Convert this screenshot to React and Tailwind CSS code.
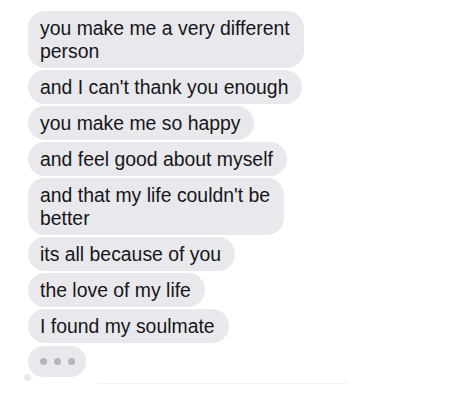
const messages = [
  ["you make me a very different", "person"],
  ["and I can't thank you enough"],
  ["you make me so happy"],
  ["and feel good about myself"],
  ["and that my life couldn't be", "better"],
  ["its all because of you"],
  ["the love of my life"],
  ["I found my soulmate"],
];

function Bubble({ lines }) {
  return (
    <div className="self-start whitespace-nowrap rounded-[17px] bg-[#e8e8ed] pl-3 pr-[14px] py-[5.5px] text-[19.4px] leading-[23px] text-[#161618]">
      {lines.map((l, i) => (
        <div key={i}>{l}</div>
      ))}
    </div>
  );
}

export default function App() {
  return (
    <div
      className="w-[474px] h-[403px] bg-white pl-[28px] pt-[11px] flex flex-col gap-[2px]"
      style={{ fontFamily: '"Liberation Sans", Arial, sans-serif' }}
    >
      {messages.map((m, i) => (
        <Bubble key={i} lines={m} />
      ))}
      <div className="relative self-start mt-[1px]">
        <div className="flex h-[31px] w-[58px] items-center justify-center gap-[7px] rounded-[16px] bg-[#e8e8ed]">
          <span className="h-[7px] w-[7px] rounded-full bg-[#b4b4ba]" />
          <span className="h-[7px] w-[7px] rounded-full bg-[#b4b4ba]" />
          <span className="h-[7px] w-[7px] rounded-full bg-[#b4b4ba]" />
        </div>
        <div className="absolute left-[-4px] bottom-[-4px] h-[7px] w-[7px] rounded-full bg-[#e8e8ed]" />
      </div>
      <div className="ml-[70px] mt-[4px] h-px w-[250px] bg-[#f3f3f5]" />
    </div>
  );
}
